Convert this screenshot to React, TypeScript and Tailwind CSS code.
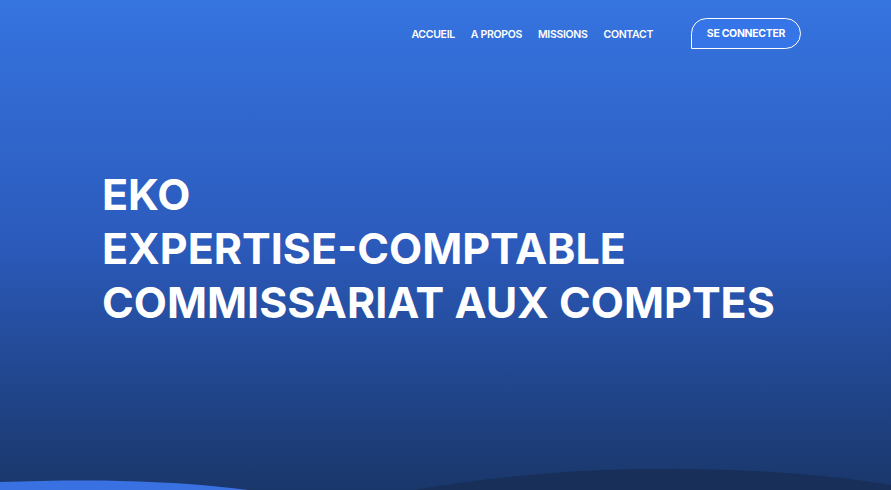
const links = ['ACCUEIL', 'A PROPOS', 'MISSIONS', 'CONTACT'];

export default function App() {
  return (
    <div
      className="relative h-[490px] w-full overflow-hidden bg-gradient-to-b from-[#3674e0] via-[#2b5abb] to-[#1a376b] text-white"
      style={{ fontFamily: 'Inter, "Noto Sans", sans-serif' }}
    >
      <header className="flex items-center justify-end pr-[90px] pt-[18px]">
        <nav className="flex items-center gap-[16px] pt-[2px] text-[10.5px] font-semibold tracking-[-0.03em]">
          {links.map((l) => (
            <a key={l} href="#" className="hover:text-blue-100">
              {l}
            </a>
          ))}
        </nav>
        <button className="ml-[38px] h-[31px] w-[110px] rounded-[16px] rounded-bl-none border-[1.5px] border-white bg-[#3575e8] pt-[1px] text-[10.5px] font-bold tracking-[-0.03em]">
          SE CONNECTER
        </button>
      </header>

      <h1 className="mt-[118px] pl-[102px] text-[43px] font-bold leading-[54px]">
        EKO
        <br />
        EXPERTISE-COMPTABLE
        <br />
        COMMISSARIAT AUX COMPTES
      </h1>

      <svg
        className="absolute bottom-0 left-0"
        width="891"
        height="30"
        viewBox="0 0 891 30"
        preserveAspectRatio="none"
      >
        <path d="M415 30 C 520 12, 600 9, 670 9 C 760 9, 840 16, 891 25 L 891 30 Z" fill="#172f59" />
        <path d="M0 22 C 40 21, 80 20, 120 21 C 170 22, 210 25, 248 30 L 0 30 Z" fill="#3a71e2" />
      </svg>
    </div>
  );
}
